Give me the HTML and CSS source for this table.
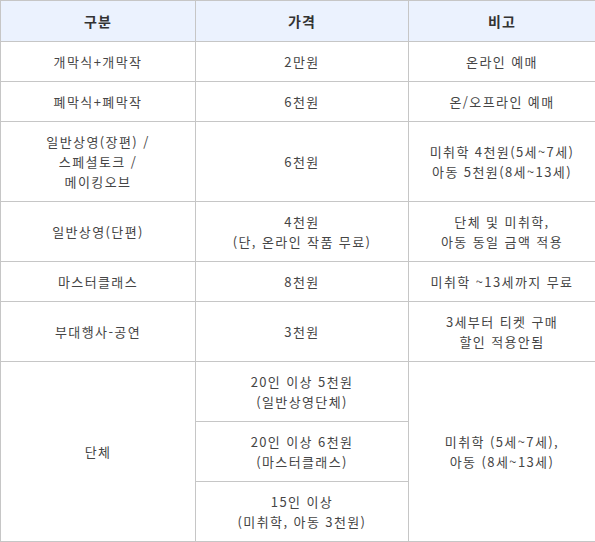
FILE: index.html
```html
<!DOCTYPE html>
<html lang="ko">
<head>
<meta charset="utf-8">
<title>요금 안내</title>
<link rel="stylesheet" href="styles.css">
</head>
<body>
<table class="price">
  <colgroup>
    <col class="c1">
    <col class="c2">
    <col class="c3">
  </colgroup>
  <thead>
    <tr><th>구분</th><th>가격</th><th>비고</th></tr>
  </thead>
  <tbody>
    <tr><td>개막식+개막작</td><td>2만원</td><td>온라인 예매</td></tr>
    <tr><td>폐막식+폐막작</td><td>6천원</td><td>온/오프라인 예매</td></tr>
    <tr><td>일반상영(장편) /<br>스페셜토크 /<br>메이킹오브</td><td>6천원</td><td>미취학 4천원(5세~7세)<br>아동 5천원(8세~13세)</td></tr>
    <tr><td>일반상영(단편)</td><td>4천원<br>(단, 온라인 작품 무료)</td><td>단체 및 미취학,<br>아동 동일 금액 적용</td></tr>
    <tr><td>마스터클래스</td><td>8천원</td><td>미취학 ~13세까지 무료</td></tr>
    <tr><td>부대행사-공연</td><td>3천원</td><td>3세부터 티켓 구매<br>할인 적용안됨</td></tr>
    <tr><td rowspan="3">단체</td><td>20인 이상 5천원<br>(일반상영단체)</td><td rowspan="3">미취학 (5세~7세),<br>아동 (8세~13세)</td></tr>
    <tr><td>20인 이상 6천원<br>(마스터클래스)</td></tr>
    <tr><td>15인 이상<br>(미취학, 아동 3천원)</td></tr>
  </tbody>
</table>
</body>
</html>
```

FILE: styles.css
```css
html, body {
  margin: 0;
  padding: 0;
  background: #ffffff;
}

.price {
  width: 595px;
  border-collapse: collapse;
  table-layout: fixed;
  font-family: "Noto Sans CJK KR", "Noto Sans", sans-serif;
  font-size: 13px;
  letter-spacing: 1.4px;
  line-height: 20px;
  color: #454545;
}

.c1 { width: 195px; }
.c2 { width: 213px; }
.c3 { width: 187px; }

.price th,
.price td {
  border: 1px solid #c6c6c6;
  padding: 10px 2px 9px;
  text-align: center;
  vertical-align: middle;
}

.price th {
  background: #ebf2fe;
  font-weight: bold;
  color: #333333;
  font-size: 14px;
  letter-spacing: 1px;
  padding: 10px 2px 10px;
}
```
